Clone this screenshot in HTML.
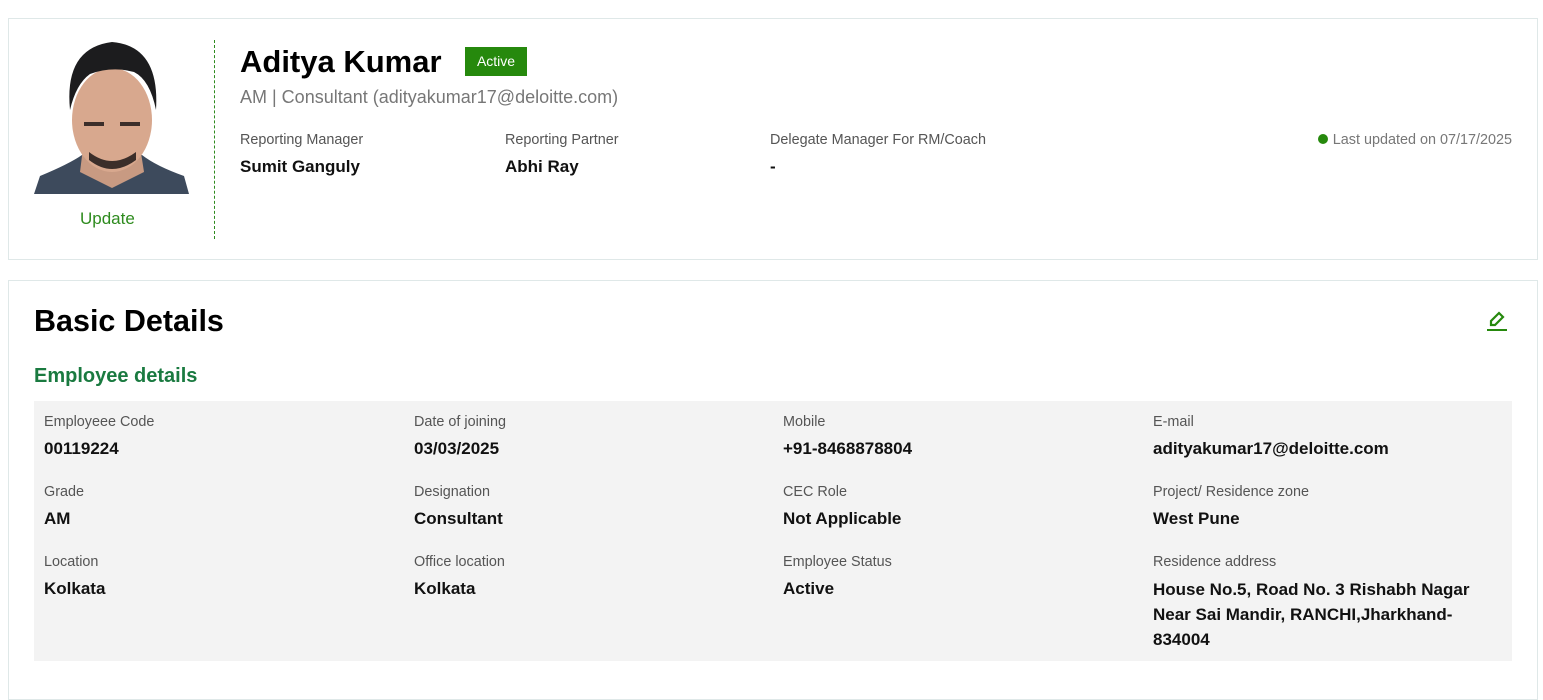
<!DOCTYPE html>
<html><head><style>
*{margin:0;padding:0;box-sizing:border-box}
body{width:1543px;height:674px;background:#fff;font-family:"Liberation Sans",sans-serif;position:relative;overflow:hidden;color:#000}
.a{position:absolute;white-space:nowrap}
.card{position:absolute;border:1px solid #dfe8e8;background:#fff}
.lbl{font-size:14.4px;color:#555}
.val{font-size:17px;font-weight:bold;color:#111}
</style></head><body>
<div class="card" style="left:8px;top:18px;width:1530px;height:242px"></div>
<div class="card" style="left:8px;top:280px;width:1530px;height:420px"></div>
<svg class="a" style="left:34px;top:40px" width="155" height="154" viewBox="0 0 155 154">
<rect width="155" height="154" fill="#fff"/>
<path d="M0 154 L6 136 Q35 124 48 115 L108 115 Q122 126 150 136 L155 154Z" fill="#3d4a5c"/>
<path d="M50 100 L105 100 L110 132 L78 148 L46 132Z" fill="#c89a82"/>
<ellipse cx="78" cy="80" rx="40" ry="52" fill="#d8a88e"/>
<path d="M36 70 Q30 8 78 2 Q126 6 122 70 Q116 40 100 32 Q78 26 56 34 Q42 44 36 70Z" fill="#1c1c1e"/>
<path d="M55 120 Q78 138 102 120 L102 112 Q78 130 55 112Z" fill="#3b2e2a"/>
<rect x="50" y="82" width="20" height="4" fill="#3b2e2a"/><rect x="86" y="82" width="20" height="4" fill="#3b2e2a"/>
</svg>
<div class="a" style="left:80px;top:209px;font-size:17px;color:#2e8b1e">Update</div>
<div class="a" style="left:214px;top:40px;height:199px;border-left:1px dashed #2e8b1e"></div>
<div class="a" style="left:240px;top:44px;font-size:31px;font-weight:bold">Aditya Kumar</div>
<div class="a" style="left:465px;top:47px;width:62px;height:29px;background:#26890d;color:#fff;font-size:14px;line-height:29px;text-align:center">Active</div>
<div class="a" style="left:240px;top:87px;font-size:18px;color:#777">AM | Consultant (adityakumar17@deloitte.com)</div>
<div class="a lbl" style="left:240px;top:132px">Reporting Manager</div>
<div class="a val" style="left:240px;top:157px">Sumit Ganguly</div>
<div class="a lbl" style="left:505px;top:132px">Reporting Partner</div>
<div class="a val" style="left:505px;top:157px">Abhi Ray</div>
<div class="a lbl" style="left:770px;top:132px">Delegate Manager For RM/Coach</div>
<div class="a val" style="left:770px;top:157px">-</div>
<div class="a" style="right:31px;top:132px;font-size:14.4px;color:#777"><span style="display:inline-block;width:10px;height:10px;border-radius:50%;background:#26890d;margin-right:5px"></span>Last updated on 07/17/2025</div>
<div class="a" style="left:34px;top:304px;font-size:30.5px;font-weight:bold">Basic Details</div>
<svg class="a" style="left:1486px;top:310px" width="22" height="22" viewBox="0 0 22 22"><path d="M5 15 L5 11 L13 3 L17 7 L9 15Z" fill="none" stroke="#26890d" stroke-width="2.2"/><rect x="1" y="19" width="20" height="2" fill="#26890d"/></svg>
<div class="a" style="left:34px;top:365px;font-size:20px;font-weight:bold;color:#1a7a40">Employee details</div>
<div class="a" style="left:34px;top:401px;width:1478px;height:260px;background:#f3f3f3"></div>
<div class="a lbl" style="left:44px;top:414px">Employeee Code</div><div class="a val" style="left:44px;top:439px">00119224</div>
<div class="a lbl" style="left:414px;top:414px">Date of joining</div><div class="a val" style="left:414px;top:439px">03/03/2025</div>
<div class="a lbl" style="left:783px;top:414px">Mobile</div><div class="a val" style="left:783px;top:439px">+91-8468878804</div>
<div class="a lbl" style="left:1153px;top:414px">E-mail</div><div class="a val" style="left:1153px;top:439px">adityakumar17@deloitte.com</div>
<div class="a lbl" style="left:44px;top:484px">Grade</div><div class="a val" style="left:44px;top:509px">AM</div>
<div class="a lbl" style="left:414px;top:484px">Designation</div><div class="a val" style="left:414px;top:509px">Consultant</div>
<div class="a lbl" style="left:783px;top:484px">CEC Role</div><div class="a val" style="left:783px;top:509px">Not Applicable</div>
<div class="a lbl" style="left:1153px;top:484px">Project/ Residence zone</div><div class="a val" style="left:1153px;top:509px">West Pune</div>
<div class="a lbl" style="left:44px;top:554px">Location</div><div class="a val" style="left:44px;top:579px">Kolkata</div>
<div class="a lbl" style="left:414px;top:554px">Office location</div><div class="a val" style="left:414px;top:579px">Kolkata</div>
<div class="a lbl" style="left:783px;top:554px">Employee Status</div><div class="a val" style="left:783px;top:579px">Active</div>
<div class="a lbl" style="left:1153px;top:554px">Residence address</div>
<div class="a val" style="left:1153px;top:577px;white-space:normal;width:345px;line-height:25px">House No.5, Road No. 3 Rishabh Nagar Near Sai Mandir, RANCHI,Jharkhand-834004</div>
</body></html>
